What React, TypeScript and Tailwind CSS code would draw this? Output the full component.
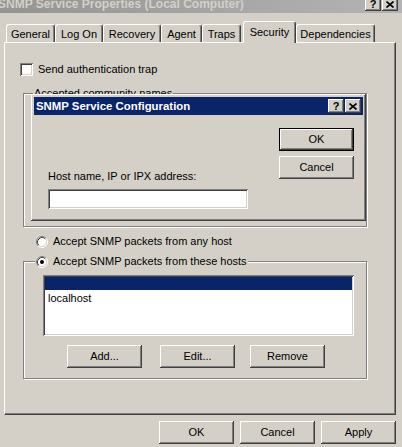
import React from 'react';

const raised =
  'shadow-[inset_-1px_-1px_0_#404040,inset_1px_1px_0_#ffffff,inset_-2px_-2px_0_#808080,inset_2px_2px_0_#d4d0c8]';
const sunken =
  'shadow-[inset_1px_1px_0_#808080,inset_-1px_-1px_0_#ffffff,inset_2px_2px_0_#404040,inset_-2px_-2px_0_#d4d0c8]';
const etched =
  'border border-[#808080] shadow-[1px_1px_0_#ffffff,inset_1px_1px_0_#ffffff]';

const tabs = [
  { label: 'General', cls: 'w-[49px]' },
  { label: 'Log On', cls: 'w-[48px]' },
  { label: 'Recovery', cls: 'w-[58px]' },
  { label: 'Agent', cls: 'w-[41px]' },
  { label: 'Traps', cls: 'w-[39px]' },
  { label: 'Security', cls: 'ml-[2px] w-[53px]', active: true },
  { label: 'Dependencies', cls: 'w-[79px]' },
];

const Button = ({
  label,
  isDefault,
  className = '',
}: {
  label: string;
  isDefault?: boolean;
  className?: string;
}) => (
  <div
    className={`flex h-[23px] w-[75px] shrink-0 items-center justify-center bg-[#d4d0c8] leading-[13px] ${
      isDefault ? 'border border-black' : ''
    } ${raised} ${className}`}
  >
    {label}
  </div>
);

const Radio = ({ checked }: { checked?: boolean }) => (
  <svg width="12" height="12" viewBox="0 0 12 12" className="shrink-0">
    <circle cx="6" cy="6" r="5" fill="#ffffff" />
    <path d="M2.11 9.89 A5.5 5.5 0 0 1 9.89 2.11" fill="none" stroke="#808080" />
    <path d="M9.89 2.11 A5.5 5.5 0 0 1 2.11 9.89" fill="none" stroke="#ffffff" />
    <path d="M2.82 9.18 A4.5 4.5 0 0 1 9.18 2.82" fill="none" stroke="#404040" />
    <path d="M9.18 2.82 A4.5 4.5 0 0 1 2.82 9.18" fill="none" stroke="#d4d0c8" />
    {checked ? <circle cx="6" cy="6" r="2" fill="#000000" /> : null}
  </svg>
);

const CaptionButtons = () => (
  <div className="flex gap-[1px]">
    <div
      className={`flex h-[14px] w-[16px] items-center justify-center bg-[#d4d0c8] text-[11px] leading-none font-bold text-black ${raised}`}
    >
      ?
    </div>
    <div
      className={`flex h-[14px] w-[16px] items-center justify-center bg-[#d4d0c8] ${raised}`}
    >
      <svg width="8" height="7" viewBox="0 0 8 7">
        <path d="M0.5 0.5 L7.5 6.5 M7.5 0.5 L0.5 6.5" stroke="#000" strokeWidth="1.6" />
      </svg>
    </div>
  </div>
);

export default function App() {
  return (
    <div className="h-[447px] w-[402px] overflow-hidden bg-[#d4d0c8] font-['Liberation_Sans',Arial,sans-serif] text-[11px] leading-[13px] text-black">
      {/* window caption, scrolled partly off the top */}
      <div className="h-[13px] overflow-hidden">
        <div className="-mt-[5px] flex h-[18px] items-center justify-between bg-gradient-to-r from-[#949494] to-[#b4b4b4] pr-[4px]">
          <span className="-ml-[2px] text-[12px] font-bold text-[#d4d0c8]">
            SNMP Service Properties (Local Computer)
          </span>
          <CaptionButtons />
        </div>
      </div>

      {/* tab strip */}
      <div className="mt-[8px] flex h-[21px] items-end pl-[6px]">
        {tabs.map((tab) =>
          tab.active ? (
            <div
              key={tab.label}
              className={`relative z-10 -mb-px flex h-[22px] justify-center rounded-t-[3px] border-t border-l border-r border-white border-r-[#404040] bg-[#d4d0c8] pt-[4px] shadow-[inset_-1px_0_0_#808080] ${tab.cls}`}
            >
              {tab.label}
            </div>
          ) : (
            <div
              key={tab.label}
              className={`flex h-[18px] justify-center rounded-t-[3px] border-t border-l border-r border-white border-r-[#404040] pt-[3px] shadow-[inset_-1px_0_0_#808080] ${tab.cls}`}
            >
              {tab.label}
            </div>
          ),
        )}
      </div>

      {/* property page */}
      <div className="relative ml-[4px] h-[373px] w-[392px] border border-white border-r-[#404040] border-b-[#404040] pl-[15px] shadow-[inset_-1px_-1px_0_#808080]">
        <div className="mt-[20px] flex h-[13px] items-center gap-[5px]">
          <div className={`h-[13px] w-[13px] bg-white ${sunken}`} />
          <span>Send authentication trap</span>
        </div>

        {/* community names, covered by the configuration dialog */}
        <div className={`relative mt-[17px] ml-[3px] h-[134px] w-[344px] ${etched}`}>
          <span className="absolute -top-[7px] left-[9px] bg-[#d4d0c8] px-[1px]">
            Accepted community names
          </span>

          <div
            className={`absolute top-0 left-[7px] z-10 flex h-[127px] w-[335px] flex-col bg-[#d4d0c8] p-[3px] ${raised}`}
          >
            <div className="flex h-[18px] shrink-0 items-center justify-between bg-[#0a246a] pr-[2px] pl-[2px]">
              <span className="text-[11.4px] font-bold text-white">SNMP Service Configuration</span>
              <CaptionButtons />
            </div>
            <div className="flex justify-between pr-[9px] pl-[14px]">
              <div className="flex flex-col pt-[55px]">
                <span>Host name, IP or IPX address:</span>
                <div className={`mt-[6px] h-[20px] w-[200px] bg-white ${sunken}`} />
              </div>
              <div className="flex flex-col gap-[5px] pt-[13px]">
                <Button label="OK" isDefault />
                <Button label="Cancel" />
              </div>
            </div>
          </div>
        </div>

        <div className="mt-[8px] ml-[16px] flex h-[13px] items-center gap-[5px]">
          <Radio />
          <span>Accept SNMP packets from any host</span>
        </div>

        {/* permitted hosts */}
        <div className={`relative mt-[13px] ml-[3px] h-[118px] w-[344px] ${etched}`}>
          <div className="absolute -top-[7px] left-[11px] flex h-[13px] items-center gap-[5px] bg-[#d4d0c8] px-[1px]">
            <Radio checked />
            <span>Accept SNMP packets from these hosts</span>
          </div>

          <div className={`mt-[13px] ml-[19px] h-[61px] w-[311px] bg-white p-[2px] ${sunken}`}>
            <div className="h-[13px] bg-[#0a246a]" />
            <div className="pt-[1px] pl-[3px] leading-[14px]">localhost</div>
          </div>

          <div className="mt-[9px] flex">
            <Button label="Add..." className="ml-[43px]" />
            <Button label="Edit..." className="ml-[18px]" />
            <Button label="Remove" className="ml-[15px]" />
          </div>
        </div>
      </div>

      <div className="mt-[6px] flex justify-end gap-[6px] pr-[6px]">
        <Button label="OK" />
        <Button label="Cancel" />
        <Button label="Apply" />
      </div>
    </div>
  );
}
